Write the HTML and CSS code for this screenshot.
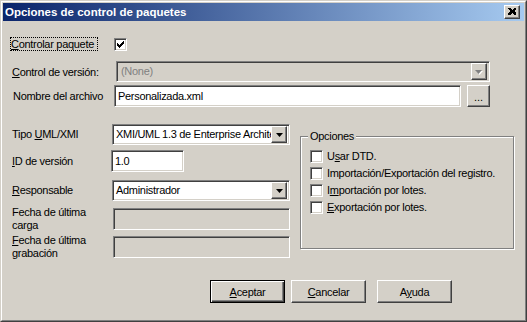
FILE: index.html
```html
<!DOCTYPE html>
<html lang="es">
<head>
    <meta charset="UTF-8">
    <title>Opciones de control de paquetes</title>
    <link rel="stylesheet" href="styles.css">
</head>
<body>

    <div class="window">
        <div class="frame">
            <div class="titlebar">
                <span class="title">Opciones de control de paquetes</span>
                <span class="close raised">
                    <svg width="8" height="7" viewBox="0 0 8 7" shape-rendering="crispEdges">
                        <path d="M0 0h2l2 2 2-2h2v1l-2 2 2 2v2h-2l-2-2-2 2h-2v-2l2-2-2-2z" fill="#000"/>
                    </svg>
                </span>
            </div>

            <div class="content">
                <!-- top rows -->
                <div class="top-row row-check">
                    <span class="focus"><u>C</u>ontrolar paquete</span>
                    <span class="checkbox">
                        <svg width="7" height="7" viewBox="0 0 7 7" shape-rendering="crispEdges">
                            <path d="M6 0h1v3h-1v1h-1v1h-1v1h-1v1h-1v-1h-1v-1h-1v-3h1v1h1v1h1v-1h1v-1h1z" fill="#000"/>
                        </svg>
                    </span>
                </div>

                <div class="top-row row-version">
                    <span class="label"><u>C</u>ontrol de versión:</span>
                    <div class="combo wide disabled">
                        <span class="value">(None)</span>
                        <span class="drop raised">
                            <svg width="8" height="5" viewBox="0 0 8 5"><path d="M0 0h7l-3.5 4z" fill="#fff" transform="translate(1 1)"/><path d="M0 0h7l-3.5 4z" fill="#808080"/></svg>
                        </span>
                    </div>
                </div>

                <div class="top-row row-file">
                    <span class="label">Nombre del archivo</span>
                    <div class="file-line">
                        <div class="field file-field">Personalizada.xml</div>
                        <span class="btn browse">...</span>
                    </div>
                </div>

                <!-- lower section -->
                <div class="lower">
                    <div class="fields">
                        <span class="label line21">Tipo <u>U</u>ML/XMI</span>
                        <div class="combo">
                            <span class="value">XMI/UML 1.3 de Enterprise Architect</span>
                            <span class="drop raised">
                                <svg width="7" height="4" viewBox="0 0 7 4"><path d="M0 0h7l-3.5 4z" fill="#000"/></svg>
                            </span>
                        </div>

                        <span class="label line22"><u>I</u>D de versión</span>
                        <div class="field short">1.0</div>

                        <span class="label line21"><u>R</u>esponsable</span>
                        <div class="combo">
                            <span class="value">Administrador</span>
                            <span class="drop raised">
                                <svg width="7" height="4" viewBox="0 0 7 4"><path d="M0 0h7l-3.5 4z" fill="#000"/></svg>
                            </span>
                        </div>

                        <span class="label two-line">Fecha de última<br>carga</span>
                        <div class="field disabled"></div>

                        <span class="label two-line"><u>F</u>echa de última<br>grabación</span>
                        <div class="field disabled"></div>
                    </div>

                    <div class="group">
                        <span class="group-title">Opciones</span>
                        <div class="options">
                            <div class="option"><span class="checkbox"></span><span>U<u>s</u>ar DTD.</span></div>
                            <div class="option"><span class="checkbox"></span><span>Importación/Exportación del registro.</span></div>
                            <div class="option"><span class="checkbox"></span><span>I<u>m</u>portación por lotes.</span></div>
                            <div class="option"><span class="checkbox"></span><span><u>E</u>xportación por lotes.</span></div>
                        </div>
                    </div>
                </div>

                <div class="buttons">
                    <span class="btn default"><span><u>A</u>ceptar</span></span>
                    <span class="btn"><span><u>C</u>ancelar</span></span>
                    <span class="btn help"><span>A<u>y</u>uda</span></span>
                </div>
            </div>
        </div>
    </div>

</body>
</html>
```

FILE: styles.css
```css
* {
    box-sizing: border-box;
}

body {
    margin: 0;
    background-color: #d4d0c8;
    font-family: "Liberation Sans", Arial, sans-serif;
    font-size: 11px;
    letter-spacing: -0.3px;
    color: #000;
}

u {
    text-decoration-thickness: 1px;
    text-underline-offset: 1px;
}

/* Classic window frame */
.window {
    width: 527px;
    height: 322px;
    border: 1px solid;
    border-color: #d4d0c8 #404040 #404040 #d4d0c8;
}

.frame {
    height: 100%;
    border: 1px solid;
    border-color: #fff #808080 #808080 #fff;
    padding: 1px;
}

.titlebar {
    height: 18px;
    display: flex;
    align-items: center;
    justify-content: space-between;
    padding: 0 4px 0 2px;
    background: linear-gradient(to right, #0a246a, #a6caf0);
}

.title {
    color: #fff;
    font-weight: bold;
    font-size: 11.5px;
    letter-spacing: 0;
}

.raised {
    background-color: #d4d0c8;
    border: 1px solid;
    border-color: #fff #404040 #404040 #fff;
    box-shadow: inset -1px -1px #808080;
}

.close {
    width: 16px;
    height: 14px;
    display: flex;
    justify-content: center;
    align-items: center;
    padding: 0 1px 1px 0;
}

.close svg {
    display: block;
}

.content {
    padding-left: 7px;
}

/* Top rows */
.top-row {
    display: grid;
    grid-template-columns: 104px auto;
    align-items: center;
}

.row-check {
    margin-top: 16px;
    height: 14px;
}

.row-version {
    margin-top: 10px;
    height: 21px;
}

.row-file {
    margin-top: 3px;
    height: 22px;
}

.focus {
    width: 88px;
    height: 14px;
    line-height: 12px;
    border: 1px dotted #000;
}

.label {
    padding-left: 2px;
    white-space: nowrap;
}

.row-file .label {
    padding-left: 3px;
}

.checkbox {
    width: 13px;
    height: 13px;
    flex-shrink: 0;
    display: flex;
    justify-content: center;
    align-items: center;
    background-color: #fff;
    border: 1px solid;
    border-color: #808080 #fff #fff #808080;
    box-shadow: inset 1px 1px #404040, inset -1px -1px #d4d0c8;
}

.checkbox svg {
    display: block;
}

/* Sunken fields and combos */
.field,
.combo {
    height: 22px;
    background-color: #fff;
    border: 1px solid;
    border-color: #808080 #fff #fff #808080;
    box-shadow: inset 1px 1px #404040, inset -1px -1px #d4d0c8;
    padding: 0 3px;
    line-height: 20px;
    white-space: nowrap;
    overflow: hidden;
}

.field.disabled {
    background-color: #d4d0c8;
}

.combo {
    height: 21px;
    width: 178px;
    display: flex;
    align-items: center;
    padding: 2px;
}

.combo .value {
    flex: 1;
    overflow: hidden;
    padding-left: 1px;
    line-height: 17px;
}

.combo .drop {
    width: 16px;
    height: 17px;
    flex-shrink: 0;
    display: flex;
    justify-content: center;
    align-items: center;
    padding-top: 1px;
}

.combo .drop svg {
    display: block;
}

.combo.wide {
    width: 374px;
    margin-left: 2px;
}

.combo.disabled {
    background-color: #d4d0c8;
    color: #808080;
}

.combo.disabled .value {
    padding-left: 2px;
}

.file-line {
    display: flex;
    gap: 6px;
}

.file-field {
    width: 347px;
}

/* Buttons */
.btn {
    width: 75px;
    height: 23px;
    display: flex;
    justify-content: center;
    align-items: center;
    background-color: #d4d0c8;
    border: 1px solid;
    border-color: #fff #404040 #404040 #fff;
    box-shadow: inset -1px -1px #808080;
}

.btn.browse {
    width: 23px;
    height: 22px;
    align-items: flex-end;
    padding-bottom: 3px;
    letter-spacing: 0;
}

.btn.default {
    border: 1px solid #000;
    box-shadow: inset 1px 1px #fff, inset -1px -1px #404040, inset -2px -2px #808080;
}

/* Lower section */
.lower {
    display: flex;
    align-items: flex-start;
    margin-top: 17px;
    padding-left: 2px;
}

.fields {
    display: grid;
    grid-template-columns: 100px 178px;
    grid-template-rows: 26px 30px 28px 28px 22px;
    align-items: start;
}

.line21 {
    line-height: 21px;
    padding-left: 0;
}

.line22 {
    line-height: 22px;
    padding-left: 0;
}

.two-line {
    line-height: 13px;
    margin-top: -2px;
    padding-left: 0;
}

.field.short {
    width: 73px;
    margin-left: -1px;
}

.fields .field.disabled {
    margin-left: 1px;
    width: 177px;
}

/* Group box */
.group {
    width: 214px;
    height: 113px;
    margin-left: 10px;
    margin-top: 12px;
    border: 1px solid #808080;
    box-shadow: inset 1px 1px #fff, 1px 1px #fff;
    padding-left: 9px;
}

.group-title {
    display: inline-block;
    margin-top: -7px;
    margin-left: -2px;
    padding: 0 2px;
    line-height: 13px;
    background-color: #d4d0c8;
    vertical-align: top;
}

.options {
    margin-top: 1px;
}

.option {
    height: 17px;
    display: flex;
    align-items: flex-start;
    gap: 4px;
    line-height: 13px;
    white-space: nowrap;
}

.buttons {
    display: flex;
    margin-top: 22px;
    padding-left: 200px;
}

.buttons .btn + .btn {
    margin-left: 6px;
}

.buttons .btn.help {
    margin-left: 11px;
}
```
